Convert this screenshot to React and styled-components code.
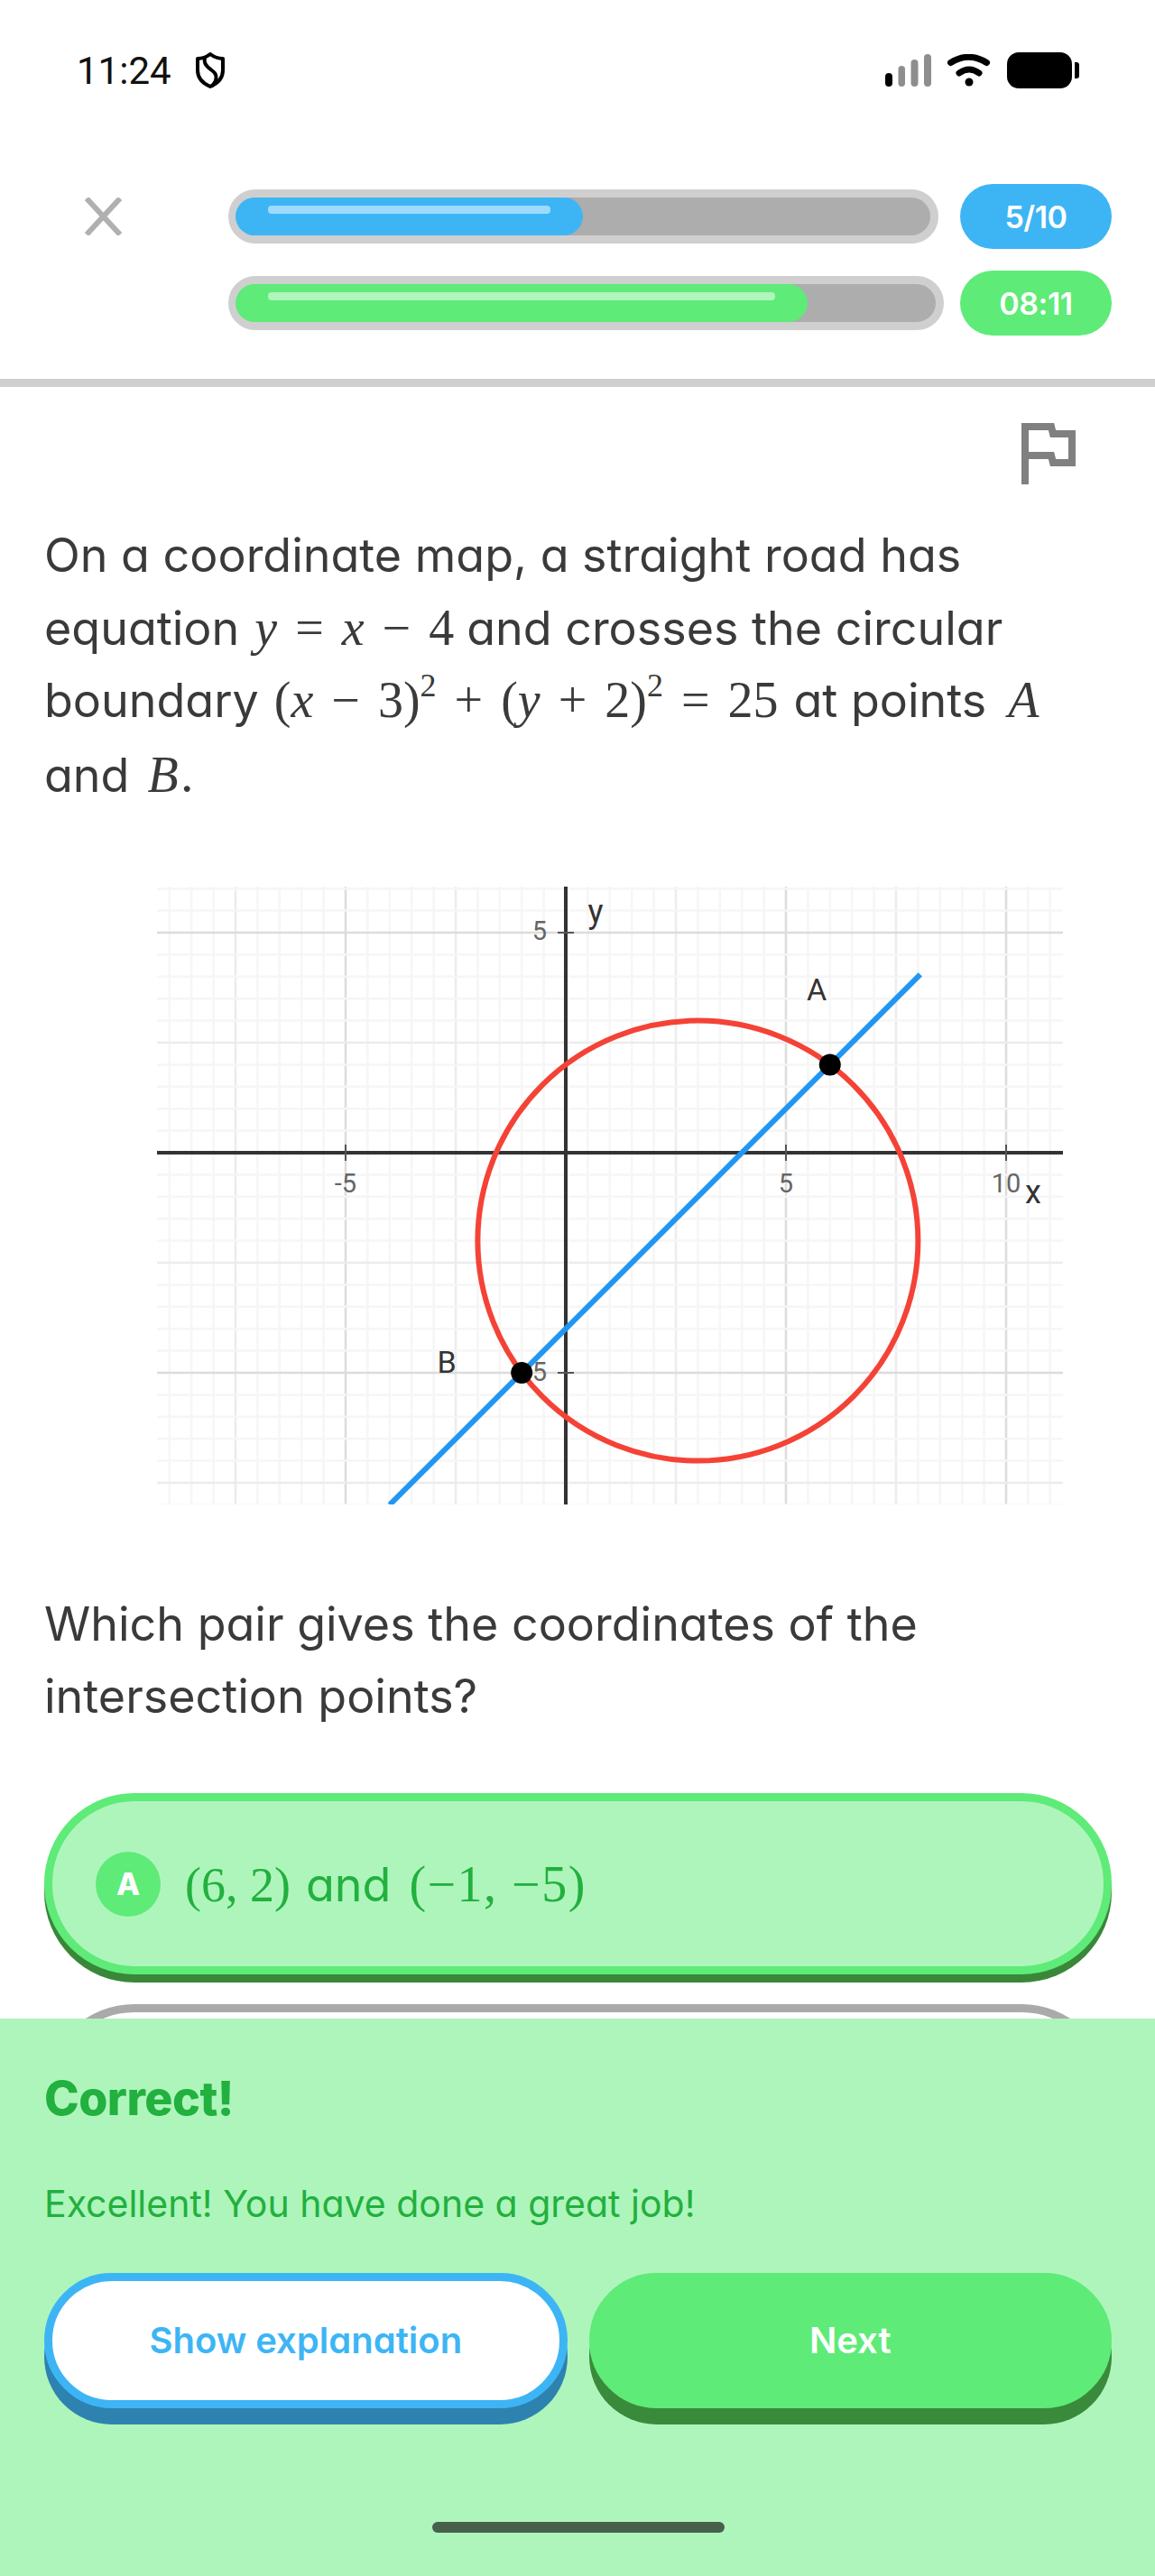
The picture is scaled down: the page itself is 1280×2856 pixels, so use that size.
import React from 'react';
import styled, {createGlobalStyle} from 'styled-components';

const GlobalStyle = createGlobalStyle`
    html, body {
        margin: 0;
        padding: 0;
        background: #fff;
    }
`;

const BLUE = '#3db5f5';
const GREEN = '#5eeb78';
const PALE = '#aef5bc';
const DARK_GREEN = '#22b03e';
const BODY_FONT = `Inter, "Liberation Sans", sans-serif`;

const Page = styled.div`
    position: relative;
    width: 1280px;
    height: 2856px;
    overflow: hidden;
    background: #fff;
    font-family: ${BODY_FONT};
    font-feature-settings: 'cv11' 1;
`;

const StatusBar = styled.div`
    display: flex;
    justify-content: space-between;
    align-items: center;
    box-sizing: border-box;
    height: 120px;
    padding: 58px 84px 22px 85px;
`;

const StatusLeft = styled.div`
    display: flex;
    align-items: center;
    gap: 27px;
`;

const Time = styled.span`
    font-family: Roboto, sans-serif;
    font-size: 42px;
    color: #111;
`;

const StatusRight = styled.div`
    display: flex;
    align-items: center;
    gap: 17px;
`;

const Battery = styled.div`
    display: flex;
    align-items: center;
    gap: 3px;
    &::before {
        content: '';
        width: 72px;
        height: 40px;
        border-radius: 13px;
        background: #000;
    }
    &::after {
        content: '';
        width: 5px;
        height: 18px;
        border-radius: 0 3px 3px 0;
        background: #000;
    }
`;

const Header = styled.div`
    display: grid;
    grid-template-columns: 41px 1fr;
    column-gap: 118px;
    padding: 84px 48px 48px 94px;
    border-bottom: 9px solid #cfcfcf;
`;

const CloseIcon = styled.svg`
    width: 41px;
    height: 42px;
    margin-top: 15px;
`;

const Bars = styled.div`
    display: flex;
    flex-direction: column;
    gap: 24px;
`;

const BarRow = styled.div`
    display: flex;
    justify-content: space-between;
    align-items: center;
`;

const Track = styled.div`
    box-sizing: border-box;
    width: ${p => p.$width}px;
    height: 60px;
    border: 9px solid #cfcfcf;
    border-radius: 30px;
    background: #adadad;
`;

const Fill = styled.div`
    box-sizing: border-box;
    width: ${p => p.$width}px;
    height: 42px;
    margin-left: -1px;
    padding: 9px 36px;
    border-radius: 21px;
    background: ${p => p.$color};
`;

const Shine = styled.div`
    height: 9px;
    border-radius: 4px;
    background: #fff;
    opacity: 0.5;
`;

const Pill = styled.div`
    display: flex;
    align-items: center;
    justify-content: center;
    width: 168px;
    height: 72px;
    border-radius: 36px;
    background: ${p => p.$color};
    color: #fff;
    font-size: 34px;
    font-weight: 600;
    letter-spacing: -0.5px;
`;

const Main = styled.div`
    padding: 40px 48px 0 49px;
`;

const FlagRow = styled.div`
    display: flex;
    justify-content: flex-end;
    padding-right: 40px;
`;

const Question = styled.div`
    margin-top: ${p => p.$top}px;
    color: #3a3a3a;
    font-size: 52px;
`;

const Line = styled.div`
    height: 80px;
    line-height: 80px;
    white-space: nowrap;
    margin-top: ${p => p.$top || 0}px;
`;

const MathText = styled.span`
    font-family: "Liberation Serif", serif;
    font-size: ${p => p.$size || 56}px;
    letter-spacing: ${p => p.$spacing || 0}px;
    word-spacing: ${p => p.$words ?? 6}px;
    margin: 0 ${p => p.$right ?? 17}px 0 ${p => p.$left ?? 17}px;
`;

const Var = styled.i`
    font-style: italic;
`;

const Sup = styled.sup`
    font-size: 36px;
    line-height: 0;
    vertical-align: 23px;
`;

const ChartWrap = styled.div`
    margin: 84px 0 0 125px;
    width: 1004px;
    height: 685px;
`;

const Option = styled.div`
    display: flex;
    align-items: center;
    gap: 27px;
    box-sizing: border-box;
    height: 201px;
    margin-top: ${p => p.$top}px;
    padding: 0 48px;
    border: 9px solid ${p => p.$border};
    border-radius: 100px;
    background: ${p => p.$bg};
    box-shadow: 0 9px 0 ${p => p.$shadow};
    color: ${DARK_GREEN};
    font-size: 52px;
`;

const Badge = styled.div`
    display: flex;
    align-items: center;
    justify-content: center;
    width: 72px;
    height: 72px;
    border-radius: 50%;
    background: ${GREEN};
    color: #fff;
    font-size: 34px;
    font-weight: 800;
`;

const FeedbackPanel = styled.div`
    position: absolute;
    left: 0;
    right: 0;
    top: 2238px;
    bottom: 0;
    display: flex;
    flex-direction: column;
    padding: 0 48px 0 49px;
    background: ${PALE};
    color: ${DARK_GREEN};
`;

const FeedbackTitle = styled.div`
    margin-top: 59px;
    font-size: 52px;
    font-weight: 800;
    line-height: 60px;
    letter-spacing: -0.5px;
`;

const FeedbackText = styled.div`
    margin-top: 61px;
    font-size: 41px;
    line-height: 50px;
`;

const Actions = styled.div`
    display: flex;
    gap: 24px;
    margin-top: 52px;
`;

const ActionButton = styled.div`
    display: flex;
    align-items: center;
    justify-content: center;
    box-sizing: border-box;
    height: 150px;
    flex: 1;
    padding-bottom: 2px;
    border: 9px solid ${p => p.$border};
    border-radius: 75px;
    background: ${p => p.$bg};
    box-shadow: 0 18px 0 ${p => p.$shadow};
    color: ${p => p.$color};
    font-size: 40px;
    font-weight: 600;
`;

const HomeBar = styled.div`
    align-self: center;
    width: 324px;
    height: 12px;
    margin-top: 126px;
    border-radius: 6px;
    background: #47604c;
`;

const ChartLabel = styled.text`
    font-family: Roboto, sans-serif;
    font-size: ${p => p.$size}px;
    fill: ${p => p.$color};
    text-anchor: middle;
    dominant-baseline: central;
`;

const SignalIcon = () => (
    <svg width="51" height="36" viewBox="0 0 51 36">
        <rect x="0" y="21" width="8" height="15" rx="4" fill="#000"/>
        <rect x="14.5" y="13" width="7.5" height="23" rx="3.7" fill="#8e8e8e"/>
        <rect x="28.5" y="6" width="8" height="30" rx="4" fill="#8e8e8e"/>
        <rect x="43" y="0" width="8" height="36" rx="4" fill="#8e8e8e"/>
    </svg>
);

const WifiIcon = () => (
    <svg width="50" height="36" viewBox="0 0 50 36" fill="none" stroke="#000" strokeWidth="7" strokeLinecap="round">
        <path d="M4.5 9.5 Q24.5 -3 44.5 9.5"/>
        <path d="M14 21 Q25 13 36 21"/>
        <circle cx="25" cy="31" r="4.5" fill="#000" stroke="none"/>
    </svg>
);

const ShieldIcon = () => (
    <svg width="32" height="40" viewBox="0 0 32 40" fill="none" stroke="#000" strokeWidth="4" strokeLinejoin="round">
        <path d="M16 2 C20 5 25 7 30 7 V20 C30 29 23 35 16 38 C9 35 2 29 2 20 V7 C7 7 12 5 16 2 Z"/>
        <path d="M10 5 C8 14 14 17 19 21 C24 25 24 32 17 38"/>
    </svg>
);

const FlagIcon = () => (
    <svg width="60" height="68" viewBox="0 0 60 68" fill="none" stroke="#808080" strokeWidth="8">
        <path d="M4 68 V4 H33 L35 12 H56 V44 H35 L33 36 H4"/>
    </svg>
);

const UNIT = 48.8;
const OX = 453;
const OY = 295;
const W = 1004;
const H = 685;

const range = (from, to) => {
    const out = [];
    for (let i = from; i <= to; i++) out.push(i);
    return out;
};

const gridStroke = (i) => {
    if (i % 10 === 0) return {stroke: '#dcdcdc', strokeWidth: 2.5};
    if (i % 5 === 0) return {stroke: '#ececec', strokeWidth: 2.5};
    return {stroke: '#f6f6f6', strokeWidth: 2.5};
};

const Chart = () => {
    const px = (x) => OX + x * UNIT;
    const py = (y) => OY - y * UNIT;
    const half = UNIT / 2;

    return (
        <svg width={W} height={H} viewBox={`0 0 ${W} ${H}`}>
            {range(-19, 22).map(i => (
                <line key={'v' + i} x1={OX + i * half} x2={OX + i * half} y1="0" y2={H} {...gridStroke(i)}/>
            ))}
            {range(-12, 16).map(i => (
                <line key={'h' + i} y1={OY + i * half} y2={OY + i * half} x1="0" x2={W} {...gridStroke(i)}/>
            ))}

            <line x1="0" x2={W} y1={OY} y2={OY} stroke="#333" strokeWidth="4"/>
            <line x1={OX} x2={OX} y1="0" y2={H} stroke="#333" strokeWidth="4"/>
            {[-5, 5, 10].map(x => (
                <line key={x} x1={px(x)} x2={px(x)} y1={OY - 9} y2={OY + 9} stroke="#555" strokeWidth="2"/>
            ))}
            {[-5, 5].map(y => (
                <line key={y} x1={OX - 9} x2={OX + 9} y1={py(y)} y2={py(y)} stroke="#555" strokeWidth="2"/>
            ))}

            <ChartLabel x={px(-5)} y="329" $size="29" $color="#666">-5</ChartLabel>
            <ChartLabel x={px(5)} y="329" $size="29" $color="#666">5</ChartLabel>
            <ChartLabel x={px(10)} y="329" $size="29" $color="#666">10</ChartLabel>
            <ChartLabel x="424" y="49" $size="29" $color="#666">5</ChartLabel>
            <ChartLabel x="424" y="538" $size="29" $color="#666">5</ChartLabel>
            <ChartLabel x="486" y="28" $size="36" $color="#333">y</ChartLabel>
            <ChartLabel x="971" y="339" $size="36" $color="#333">x</ChartLabel>
            <ChartLabel x="731" y="114" $size="34" $color="#333">A</ChartLabel>
            <ChartLabel x="321" y="527" $size="34" $color="#333">B</ChartLabel>

            <circle cx={px(3)} cy={py(-2)} r={UNIT * 5} fill="none" stroke="#f44336" strokeWidth="6"/>
            <line x1={px(-4)} y1={py(-8)} x2={px(8.05)} y2={py(4.05)} stroke="#2196f3" strokeWidth="6"/>
            <circle cx={px(6)} cy={py(2)} r="12" fill="#000"/>
            <circle cx={px(-1)} cy={py(-5)} r="12" fill="#000"/>
        </svg>
    );
};

export default function App() {
    return (
        <Page>
            <GlobalStyle/>
            <StatusBar>
                <StatusLeft>
                    <Time>11:24</Time>
                    <ShieldIcon/>
                </StatusLeft>
                <StatusRight>
                    <SignalIcon/>
                    <WifiIcon/>
                    <Battery/>
                </StatusRight>
            </StatusBar>

            <Header>
                <CloseIcon viewBox="0 0 41 42" fill="none" stroke="#b0b0b0" strokeWidth="6">
                    <path d="M2 1 L39 41 M39 1 L2 41"/>
                </CloseIcon>
                <Bars>
                    <BarRow>
                        <Track $width={787}>
                            <Fill $width={385} $color={BLUE}><Shine/></Fill>
                        </Track>
                        <Pill $color={BLUE}>5/10</Pill>
                    </BarRow>
                    <BarRow>
                        <Track $width={793}>
                            <Fill $width={634} $color={GREEN}><Shine/></Fill>
                        </Track>
                        <Pill $color={GREEN}>08:11</Pill>
                    </BarRow>
                </Bars>
            </Header>

            <Main>
                <FlagRow><FlagIcon/></FlagRow>
                <Question $top={39}>
                    <Line>On a coordinate map, a straight road has</Line>
                    <Line>equation<MathText $right={14}><Var>y</Var> = <Var>x</Var> − 4</MathText>and crosses the circular</Line>
                    <Line>boundary<MathText>(<Var>x</Var> − 3)<Sup>2</Sup> + (<Var>y</Var> + 2)<Sup>2</Sup> = 25</MathText>at points<MathText $left={24} $right={0}><Var>A</Var></MathText></Line>
                    <Line $top={3}>and<MathText $left={20} $right={2}><Var>B</Var></MathText>.</Line>
                </Question>

                <ChartWrap><Chart/></ChartWrap>

                <Question $top={93}>
                    <Line>Which pair gives the coordinates of the</Line>
                    <Line>intersection points?</Line>
                </Question>

                <Option $top={67} $border={GREEN} $bg={PALE} $shadow="#3a873a">
                    <Badge>A</Badge>
                    <span><MathText $size={54} $left={0} $right={17} $words={0}>(6, 2)</MathText>and<MathText $left={20} $right={0} $spacing={1.5} $words={0}>(−1, −5)</MathText></span>
                </Option>
                <Option $top={33} $border="#aaaaaa" $bg="#fff" $shadow="#888"/>
            </Main>

            <FeedbackPanel>
                <FeedbackTitle>Correct!</FeedbackTitle>
                <FeedbackText>Excellent! You have done a great job!</FeedbackText>
                <Actions>
                    <ActionButton $border={BLUE} $bg="#fff" $shadow="#2e82b0" $color={BLUE}>Show explanation</ActionButton>
                    <ActionButton $border={GREEN} $bg={GREEN} $shadow="#3a8a3c" $color="#fff">Next</ActionButton>
                </Actions>
                <HomeBar/>
            </FeedbackPanel>
        </Page>
    );
}
